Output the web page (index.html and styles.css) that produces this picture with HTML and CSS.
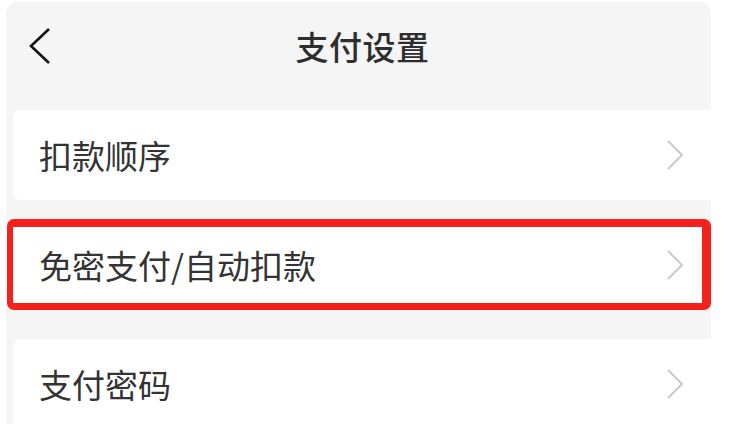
FILE: index.html
```html
<!DOCTYPE html>
<html lang="zh-CN">
<head>
<meta charset="utf-8">
<title>支付设置</title>
<link rel="stylesheet" href="styles.css">
</head>
<body>
<div class="panel">
  <header class="header">
    <div class="back">
      <svg width="24" height="38" viewBox="0 0 24 38"><polyline points="21,2 3,19 21,36" fill="none" stroke="#111" stroke-width="2.6" stroke-linejoin="miter"/></svg>
    </div>
    <h1 class="title">支付设置</h1>
    <div class="spacer"></div>
  </header>
  <div class="list">
    <div class="row">
      <span class="label">扣款顺序</span>
      <svg class="chev" width="18" height="30" viewBox="0 0 18 30"><polyline points="2,1 16,15 2,29" fill="none" stroke="#c9c9c9" stroke-width="2"/></svg>
    </div>
    <div class="highlight">
      <div class="row inner">
        <span class="label">免密支付/自动扣款</span>
        <svg class="chev" width="18" height="30" viewBox="0 0 18 30"><polyline points="2,1 16,15 2,29" fill="none" stroke="#c9c9c9" stroke-width="2"/></svg>
      </div>
    </div>
    <div class="row last">
      <span class="label">支付密码</span>
      <svg class="chev" width="18" height="30" viewBox="0 0 18 30"><polyline points="2,1 16,15 2,29" fill="none" stroke="#c9c9c9" stroke-width="2"/></svg>
    </div>
  </div>
</div>
</body>
</html>
```

FILE: styles.css
```css
html, body {
  margin: 0;
  padding: 0;
  background: #ffffff;
  overflow: hidden;
}
body {
  width: 739px;
  height: 424px;
  font-family: "Noto Sans CJK SC", "Noto Sans", sans-serif;
  color: #333333;
}
.panel {
  margin: 1px 0 0 6px;
  width: 705px;
  height: 440px;
  background: #f5f5f5;
  border-radius: 14px 14px 0 0;
  display: flex;
  flex-direction: column;
}
.header {
  height: 100px;
  display: grid;
  grid-template-columns: 1fr auto 1fr;
  align-items: center;
}
.back {
  padding-left: 22px;
  display: flex;
  align-items: center;
  margin-top: -11px;
}
.title {
  margin: 0;
  margin-top: -11px;
  padding-left: 8px;
  font-size: 33px;
  font-weight: 500;
  color: #2e2e2e;
  letter-spacing: 0.5px;
}
.list {
  display: flex;
  flex-direction: column;
  padding-top: 9px;
}
.row {
  margin-left: 7px;
  height: 90px;
  background: #ffffff;
  border-radius: 8px 0 0 8px;
  display: flex;
  align-items: center;
  justify-content: space-between;
  padding: 0 27px 0 26px;
}
.label {
  font-size: 33px;
  color: #333333;
  line-height: 1;
}
.chev {
  display: block;
}
.highlight {
  margin-top: 19px;
  margin-left: 1px;
  height: 91px;
  box-sizing: border-box;
  border-style: solid;
  border-color: #f5221b;
  border-width: 8px 9px 7px 6px;
  border-radius: 7px;
  background: #ffffff;
  display: flex;
}
.row.inner {
  margin-left: 0;
  flex: 1;
  height: auto;
  border-radius: 0;
  padding: 0 18px 0 26px;
}
.row.last {
  margin-top: 29px;
}
```
